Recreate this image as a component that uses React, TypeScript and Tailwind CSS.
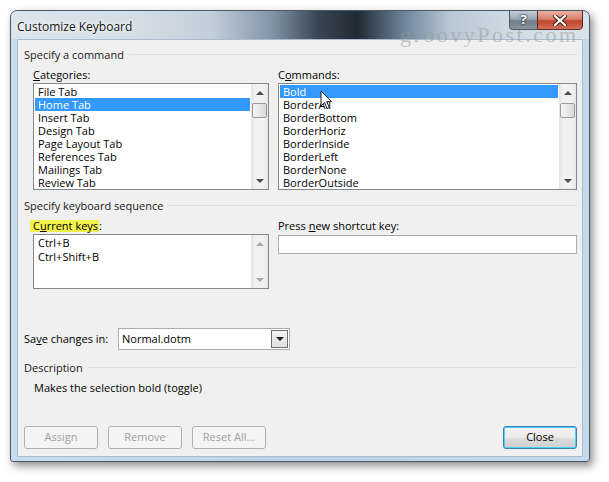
import React from "react";

const categories = [
  "File Tab",
  "Home Tab",
  "Insert Tab",
  "Design Tab",
  "Page Layout Tab",
  "References Tab",
  "Mailings Tab",
  "Review Tab",
];

const commands = [
  "Bold",
  "BorderAll",
  "BorderBottom",
  "BorderHoriz",
  "BorderInside",
  "BorderLeft",
  "BorderNone",
  "BorderOutside",
];

function Tri({ up, disabled }: { up?: boolean; disabled?: boolean }) {
  if (up) {
    return (
      <div
        className={`w-0 h-0 border-x-[4px] border-x-transparent border-b-[4px] ${
          disabled ? "border-b-[#a8a8a8]" : "border-b-[#4a4a4a]"
        }`}
      />
    );
  }
  return (
    <div
      className={`w-0 h-0 border-x-[4px] border-x-transparent border-t-[4px] ${
        disabled ? "border-t-[#a8a8a8]" : "border-t-[#4a4a4a]"
      }`}
    />
  );
}

function ScrollBar({ thumb, disabled }: { thumb?: boolean; disabled?: boolean }) {
  return (
    <div className="w-[17px] shrink-0 flex flex-col bg-[linear-gradient(90deg,#e4e4e4,#f1f1f1_25%,#f1f1f1_75%,#e6e6e6)]">
      <div className="h-[17px] flex items-center justify-center">
        <Tri up disabled={disabled} />
      </div>
      {thumb && (
        <div className="mx-[1px] mt-[2px] h-[15px] rounded-[2px] border border-[#9a9a9a] bg-[linear-gradient(90deg,#f6f6f6,#e8e8e8_50%,#d9d9d9)]" />
      )}
      <div className="flex-1" />
      <div className="h-[17px] flex items-center justify-center">
        <Tri disabled={disabled} />
      </div>
    </div>
  );
}

function ListBox({
  items,
  selected,
  width,
  height,
  rowH = 13,
}: {
  items: string[];
  selected?: number;
  width: string;
  height: string;
  rowH?: number;
}) {
  return (
    <div className={`${width} ${height} border border-[#828790] bg-white flex`}>
      <div className="flex-1 p-[1px] overflow-hidden">
        {items.map((it, i) => (
          <div
            key={it}
            style={{ height: rowH, lineHeight: `${rowH}px` }}
            className={`pl-[3px] whitespace-nowrap ${i === selected ? "bg-[#3399ff] text-white" : "text-black"}`}
          >
            {it}
          </div>
        ))}
      </div>
      <ScrollBar thumb={items.length > 4} disabled={items.length <= 4} />
    </div>
  );
}

function Heading({ children }: { children: React.ReactNode }) {
  return (
    <div className="flex items-center h-[15px] leading-[15px] text-[#1b1b1b]">
      <span>{children}</span>
      <div className="flex-1 h-px bg-[#d9e2e8] ml-[5px]" />
    </div>
  );
}

function Btn({ children, primary }: { children: React.ReactNode; primary?: boolean }) {
  return primary ? (
    <div className="w-[74px] h-[23px] rounded-[3px] border border-[#3c7fb1] shadow-[inset_0_0_0_1px_#48d3f8] bg-[linear-gradient(180deg,#f2f2f2,#ebebeb_50%,#dddddd_51%,#cfcfcf)] flex items-center justify-center text-black">
      {children}
    </div>
  ) : (
    <div className="w-[74px] h-[23px] rounded-[3px] border border-[#adb2b5] bg-[#f4f4f4] flex items-center justify-center text-[#a0a0a0]">
      {children}
    </div>
  );
}

export default function App() {
  return (
    <div
      className="w-[609px] h-[482px] bg-white relative overflow-hidden text-[11px]"
      style={{ fontFamily: '"Open Sans", "Noto Sans", sans-serif' }}
    >
      <div className="absolute left-[10px] top-[10px] w-[580px] h-[452px] rounded-t-[7px] rounded-b-[3px] border border-[#4b5866] shadow-[3px_4px_9px_rgba(0,0,0,0.45)] bg-[linear-gradient(90deg,#c9dbee,#bfd3e8_50%,#c5d8ec)] flex flex-col overflow-hidden">
        {/* Title bar */}
        <div className="h-[28px] shrink-0 flex items-start pl-[6px] pr-[6px] rounded-t-[6px] bg-[linear-gradient(90deg,#dde5ec_0%,#d3dde6_22%,#c1cdd9_35%,#8396a8_45%,#3a4654_53%,#202a34_60%,#6e859a_68%,#b9c8d5_76%,#d2dce5_88%,#dbe3ea_100%)]">
          <div className="mt-[8px] text-[12px] leading-[15px] text-[#141414] [text-shadow:0_0_6px_#ffffff,0_0_3px_#ffffff]">
            Customize Keyboard
          </div>
          <div className="ml-auto flex -mt-px">
            <div className="w-[28px] h-[20px] rounded-bl-[4px] border border-[#4d5864] border-r-0 bg-[linear-gradient(180deg,#c6ced6,#9aa6b2_45%,#6f7c89_55%,#8894a0)] flex items-center justify-center text-white font-bold text-[13px] [text-shadow:0_0_2px_#1f2a35,0_0_2px_#1f2a35]">
              ?
            </div>
            <div className="w-[46px] h-[20px] rounded-br-[4px] border border-[#5b2a24] bg-[linear-gradient(180deg,#eab1a4,#d9806c_45%,#c2442c_55%,#d2705a)] flex items-center justify-center">
              <svg width="14" height="11" viewBox="0 0 14 11">
                <path d="M2 1 L12 10 M12 1 L2 10" stroke="#3b1a14" strokeWidth="4" strokeLinecap="square" />
                <path d="M2 1 L12 10 M12 1 L2 10" stroke="#ffffff" strokeWidth="2.2" strokeLinecap="square" />
              </svg>
            </div>
          </div>
        </div>

        {/* Client */}
        <div className="flex-1 mx-[6px] mb-[4px] bg-[#f0f0f0] border border-[#a9bccf] flex flex-col pl-[6px] pr-[5px] pt-[7px]">
          <Heading>Specify a command</Heading>
          <div className="flex gap-[9px] mt-[5px] pl-[9px]">
            <div className="flex flex-col">
              <div className="h-[15px] leading-[15px]">
                <span className="underline">C</span>ategories:
              </div>
              <div className="mt-[1px]">
                <ListBox items={categories} selected={1} width="w-[236px]" height="h-[107px]" />
              </div>
            </div>
            <div className="flex flex-col">
              <div className="h-[15px] leading-[15px]">
                C<span className="underline">o</span>mmands:
              </div>
              <div className="mt-[1px]">
                <ListBox items={commands} selected={0} width="w-[299px]" height="h-[107px]" />
              </div>
            </div>
          </div>

          <div className="mt-[8px]">
            <Heading>Specify keyboard sequence</Heading>
          </div>
          <div className="flex gap-[9px] mt-[5px] pl-[9px]">
            <div className="flex flex-col">
              <div className="h-[15px] leading-[15px] flex items-center">
                <span className="inline-block h-[12px] leading-[12px] bg-[#f3f24a] pl-[3px] pr-px -ml-[3px]">
                  C<span className="underline">u</span>rrent keys
                </span>
                <span>:</span>
              </div>
              <div className="mt-[1px]">
                <ListBox items={["Ctrl+B", "Ctrl+Shift+B"]} width="w-[236px]" height="h-[55px]" rowH={14} />
              </div>
            </div>
            <div className="flex flex-col">
              <div className="h-[15px] leading-[15px]">
                Press <span className="underline">n</span>ew shortcut key:
              </div>
              <div className="mt-[2px] w-[299px] h-[19px] border border-[#abadb3] bg-white" />
            </div>
          </div>

          <div className="flex items-center mt-[39px]">
            <div className="w-[94px]">
              Sa<span className="underline">v</span>e changes in:
            </div>
            <div className="w-[172px] h-[22px] border border-[#abadb3] bg-white flex items-center">
              <span className="pl-[3px] flex-1">Normal.dotm</span>
              <div className="w-[17px] h-[18px] mr-[1px] border border-[#707070] bg-[linear-gradient(180deg,#f2f2f2,#e0e0e0)] flex items-center justify-center">
                <div className="w-0 h-0 border-x-[4px] border-x-transparent border-t-[4px] border-t-[#202020]" />
              </div>
            </div>
          </div>

          <div className="mt-[10px]">
            <Heading>Description</Heading>
          </div>
          <div className="mt-[5px] h-[15px] leading-[15px] pl-[10px]">Makes the selection bold (toggle)</div>

          <div className="flex gap-[10px] mt-[31px]">
            <Btn>Assign</Btn>
            <Btn>Remove</Btn>
            <Btn>Reset All...</Btn>
            <div className="ml-auto">
              <Btn primary>Close</Btn>
            </div>
          </div>
        </div>
      </div>

      {/* watermark */}
      <div
        className="absolute left-[400px] top-[18px] text-[22px] tracking-[2.5px] text-[rgba(150,150,150,0.5)] pointer-events-none"
        style={{ fontFamily: '"Liberation Serif", serif' }}
      >
        groovyPost.com
      </div>

      {/* mouse cursor */}
      <svg className="absolute left-[320px] top-[90px]" width="13" height="21" viewBox="0 0 13 21">
        <path
          d="M1 1 L1 16 L4.5 12.5 L7 18.5 L9.3 17.5 L6.8 11.7 L11.5 11.7 Z"
          fill="#ffffff"
          stroke="#202020"
          strokeWidth="1"
          strokeLinejoin="round"
        />
      </svg>
    </div>
  );
}
